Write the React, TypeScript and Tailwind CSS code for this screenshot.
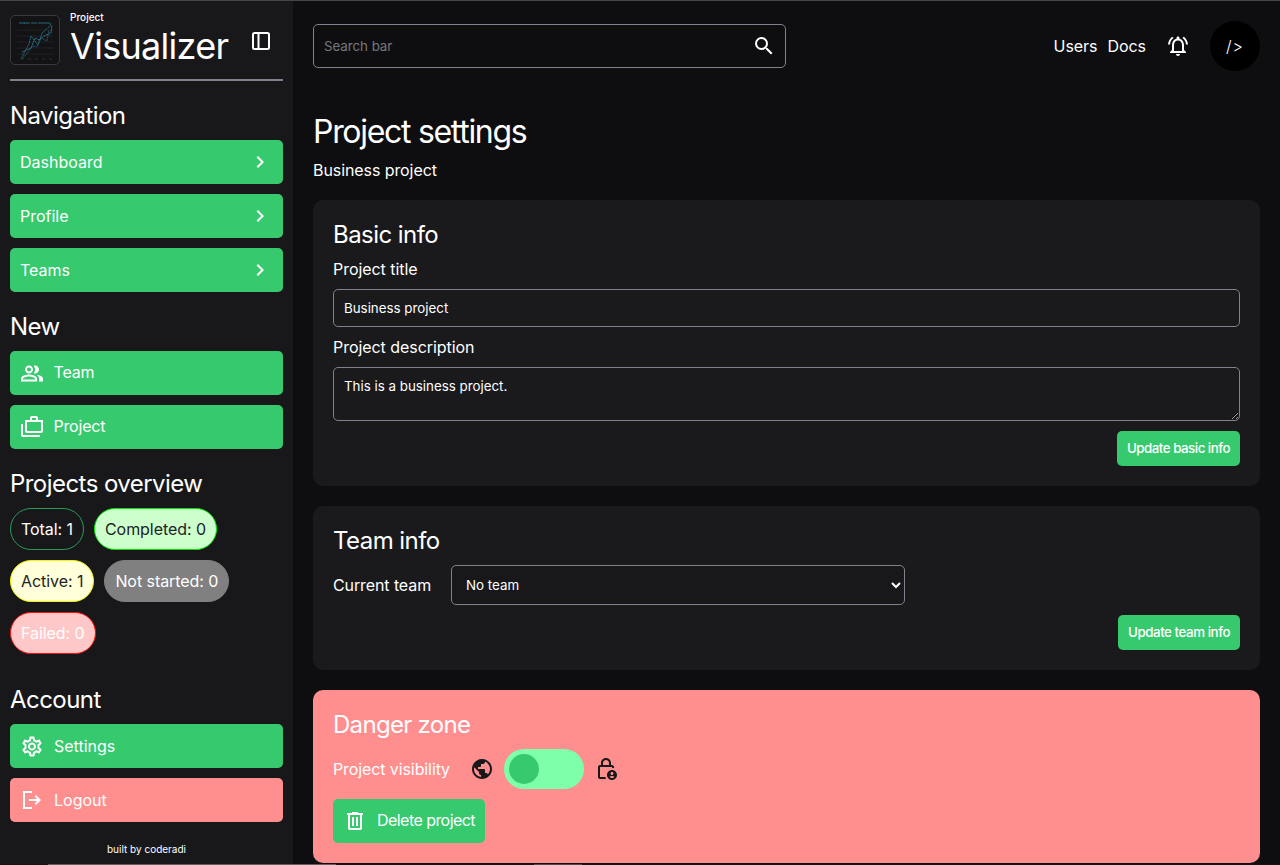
import React from "react";
import {
  MdChevronRight, MdOutlinePeopleAlt, MdOutlineCases, MdOutlineSettings,
  MdOutlineNotificationsActive, MdSearch, MdPublic, MdOutlineLockPerson,
} from "react-icons/md";

function Sym({ d, size = 24, className = "" }: { d: string; size?: number; className?: string }) {
  return (
    <svg width={size} height={size} viewBox="0 -960 960 960" fill="currentColor" className={className}>
      <path d={d} />
    </svg>
  );
}

const LOGOUT = "M120-120v-720h360v80H200v560h280v80H120Zm520-160-55-58 102-102H360v-80h327L585-622l55-58 200 200-200 200Z";
const TRASH = "M280-120q-33 0-56.5-23.5T200-200v-520h-40v-80h200v-40h240v40h200v80h-40v520q0 33-23.5 56.5T680-120H280Zm400-600H280v520h400v-520ZM360-280h80v-360h-80v360Zm160 0h80v-360h-80v360ZM280-720v520-520Z";

function Logo() {
  return (
    <div className="w-[50px] h-[50px] rounded-[5px] border border-[#3a3a3d] bg-[#131316] shrink-0">
      <svg width="48" height="48" viewBox="0 0 48 48" fill="none">
        <path d="M8 7h6M13 7h6M20 7h6M27 7h6M33 7h6" stroke="#2f7f8f" strokeWidth="0.8" />
        <path d="M6 14h36M6 20h36M6 26h36M6 32h36M6 38h36" stroke="#2b2b2f" strokeWidth="0.6" />
        <path d="M10 43h32" stroke="#444" strokeWidth="0.6" strokeDasharray="3 4" />
        <path d="M10 43L18 28 20 20 27 29 31 17 39 10 40 7" stroke="#2f8fa5" strokeWidth="0.7" strokeDasharray="2 0.6" />
        <path d="M11 36L20 32 24 22 28 24 33 20 40 17 41 9" stroke="#3a9fb0" strokeWidth="0.7" strokeDasharray="2 0.6" />
        <path d="M12 42L22 30 26 31 30 22 36 25 38 14" stroke="#256f86" strokeWidth="0.7" strokeDasharray="2 0.6" />
      </svg>
    </div>
  );
}

function H({ children, className = "" }: { children: React.ReactNode; className?: string }) {
  return <h2 className={`text-[24px] leading-[30px] tracking-[-0.55px] text-white ${className}`}>{children}</h2>;
}

function NavBtn({ label }: { label: string }) {
  return (
    <button className="h-11 w-full rounded-[5px] bg-[#36c96e] flex items-center justify-between pl-2.5 pr-[11px] text-white text-base">
      <span>{label}</span>
      <MdChevronRight size={24} />
    </button>
  );
}

function IconBtn({ label, icon, red, labelClass = "-mt-[1px]" }: { label: string; icon: React.ReactNode; red?: boolean; labelClass?: string }) {
  return (
    <button className={`h-11 w-full rounded-[5px] flex items-center gap-2.5 pl-2.5 text-white text-base ${red ? "bg-[#ff8f8f]" : "bg-[#36c96e]"}`}>
      <span className="w-[24px] h-[24px] flex items-center justify-center text-white">{icon}</span>
      <span className={labelClass}>{label}</span>
    </button>
  );
}

function Chip({ label, className }: { label: string; className: string }) {
  return (
    <span className={`h-[42px] px-2.5 rounded-[21px] border flex items-center text-base tracking-[-0.06px] whitespace-nowrap ${className}`}>{label}</span>
  );
}

function GreenSmall({ label, className = "tracking-[-0.45px]" }: { label: string; className?: string }) {
  return (
    <button className={`h-[35px] px-2.5 rounded-[5px] bg-[#36c96e] text-white text-[13.33px] font-medium ${className}`}>{label}</button>
  );
}

function Sidebar() {
  return (
    <aside className="w-[293px] shrink-0 h-full bg-[#18181b] px-2.5 flex flex-col">
      <div className="h-[80px] shrink-0 border-b-2 border-[#82808c] flex items-start pt-[14px]">
        <Logo />
        <div className="ml-2.5 w-[168px] -mt-[1px]">
          <div className="text-[10px] leading-[8px] -mt-[1px] mb-[3px] text-white font-medium">Project</div>
          <div className="text-[36px] leading-[44px] tracking-[-0.7px] text-white">Visualizer</div>
        </div>
        <svg className="ml-[13px] mt-[16px]" width="20" height="20" viewBox="0 0 20 20" fill="none" stroke="white" strokeWidth="2">
          <rect x="2" y="2" width="16" height="16" rx="1.5" />
          <path d="M7.5 2v16" />
        </svg>
      </div>
      <H className="mt-[20px] mb-[9px]">Navigation</H>
      <div className="flex flex-col gap-2.5">
        <NavBtn label="Dashboard" />
        <NavBtn label="Profile" />
        <NavBtn label="Teams" />
      </div>
      <H className="mt-[20px] mb-[9px]">New</H>
      <div className="flex flex-col gap-2.5">
        <IconBtn label="Team" labelClass="-mt-[2px] -ml-[0.5px] tracking-[-0.2px]" icon={<MdOutlinePeopleAlt size={25} />} />
        <IconBtn label="Project" labelClass="-mt-[2px] -ml-[0.5px] tracking-[-0.2px]" icon={<MdOutlineCases size={24} />} />
      </div>
      <H className="mt-[20px] mb-[9px]">Projects overview</H>
      <div className="flex flex-wrap gap-x-2.5 gap-y-2.5">
        <Chip label="Total: 1" className="border-[#2a9a58] text-white bg-[#18181b]" />
        <Chip label="Completed: 0" className="border-[#00e600] bg-[#ccffcc] text-[#222226]" />
        <Chip label="Active: 1" className="border-[#f5f500] bg-[#ffffd9] text-[#222226]" />
        <Chip label="Not started: 0" className="border-[#808080] bg-[#808080] text-white" />
        <Chip label="Failed: 0" className="border-[#ff1010] bg-[#ffc8c8] text-white" />
      </div>
      <H className="mt-[31px] mb-[9px]">Account</H>
      <div className="flex flex-col gap-2.5">
        <IconBtn label="Settings" icon={<MdOutlineSettings size={25} />} />
        <IconBtn label="Logout" icon={<Sym d={LOGOUT} />} red />
      </div>
      <div className="mt-[20px] text-center text-[10px] leading-[14px] text-white">built by coderadi</div>
    </aside>
  );
}

function Card({ title, children }: { title: string; children: React.ReactNode }) {
  return (
    <section className="rounded-[10px] bg-[#1a1a1d] p-5">
      <h2 className="text-[24px] leading-[30px] tracking-[-0.55px] text-white mb-[9px]">{title}</h2>
      {children}
    </section>
  );
}

export default function App() {
  return (
    <div className="h-[865px] w-full overflow-hidden bg-[#0e0e10] flex flex-col border-t border-[#44444a] font-['Inter','Liberation_Sans',sans-serif] text-white">
      <div className="flex flex-1 min-h-0">
        <Sidebar />
        <main className="flex-1 min-w-0 px-5">
          <header className="h-[90px] flex items-center justify-between pb-[1px]">
            <div className="w-[473px] h-11 rounded-[5px] border border-[#82808c] flex items-center justify-between pl-2.5 pr-[9px]">
              <span className="text-[13.33px] tracking-[-0.05px] text-[#77777c] mt-[2px]">Search bar</span>
              <MdSearch size={24} className="text-white" />
            </div>
            <div className="flex items-center">
              <span className="text-base tracking-[-0.05px]">Users</span>
              <span className="text-base ml-2.5 tracking-[-0.05px]">Docs</span>
              <MdOutlineNotificationsActive size={24} className="ml-5" />
              <div className="ml-5 w-[50px] h-[50px] rounded-full bg-black flex items-center justify-center text-base font-light tracking-[1px]">/&gt;</div>
            </div>
          </header>
          <h1 className="text-[32px] leading-[40px] tracking-[-1.3px] mt-[21px] text-white">Project settings</h1>
          <p className="text-base leading-[20px] tracking-[-0.08px] mt-[8px] mb-[20px]">Business project</p>
          <div className="flex flex-col gap-5">
            <Card title="Basic info">
              <label className="block text-base leading-[20px] tracking-[-0.05px]">Project title</label>
              <input
                readOnly
                value="Business project"
                className="block mt-2.5 w-full h-[38px] rounded-[5px] border border-[#82808c] bg-transparent px-2.5 text-[13.33px] text-white outline-none"
              />
              <label className="block text-base leading-[20px] tracking-[-0.05px] mt-2.5">Project description</label>
              <textarea
                readOnly
                value="This is a business project."
                className="block mt-2.5 w-full h-[54px] rounded-[5px] border border-[#82808c] bg-transparent px-2.5 py-2.5 text-[13.33px] leading-[16px] text-white outline-none resize-y"
              />
              <div className="flex justify-end mt-2.5">
                <GreenSmall label="Update basic info" className="tracking-[-0.5px]" />
              </div>
            </Card>
            <Card title="Team info">
              <div className="flex items-center mt-[2px]">
                <span className="text-base tracking-[-0.1px] mr-5">Current team</span>
                <select className="w-[454px] h-10 rounded-[5px] border border-[#82808c] bg-[#18181b] pl-2.5 text-[13.33px] text-white outline-none">
                  <option>No team</option>
                </select>
              </div>
              <div className="flex justify-end mt-2.5">
                <GreenSmall label="Update team info" />
              </div>
            </Card>
            <section className="rounded-[10px] bg-[#ff8f8f] p-5 text-white">
              <h2 className="text-[24px] leading-[30px] tracking-[-0.7px] mb-[9px]">Danger zone</h2>
              <div className="flex items-center h-10">
                <span className="text-base tracking-[-0.1px]">Project visibility</span>
                <MdPublic size={24} className="ml-5 text-[#18181b]" />
                <div className="ml-2.5 w-20 h-10 rounded-full bg-[#7effa9] flex items-center pl-[5px]">
                  <span className="w-[30px] h-[30px] rounded-full bg-[#36c96e]" />
                </div>
                <MdOutlineLockPerson size={24} className="ml-2.5 text-[#18181b]" />
              </div>
              <button className="mt-2.5 h-11 px-2.5 rounded-[5px] bg-[#36c96e] flex items-center gap-[10px] text-base tracking-[-0.55px] text-white">
                <Sym d={TRASH} />
                <span className="-mt-[2px]">Delete project</span>
              </button>
            </section>
          </div>
        </main>
      </div>
      <div className="h-px shrink-0 flex bg-[#141416]">
        <div className="ml-[48px] w-[288px] bg-[#5f5f62]" />
        <div className="ml-[198px] w-[48px] bg-[#4a4a4d]" />
      </div>
    </div>
  );
}
